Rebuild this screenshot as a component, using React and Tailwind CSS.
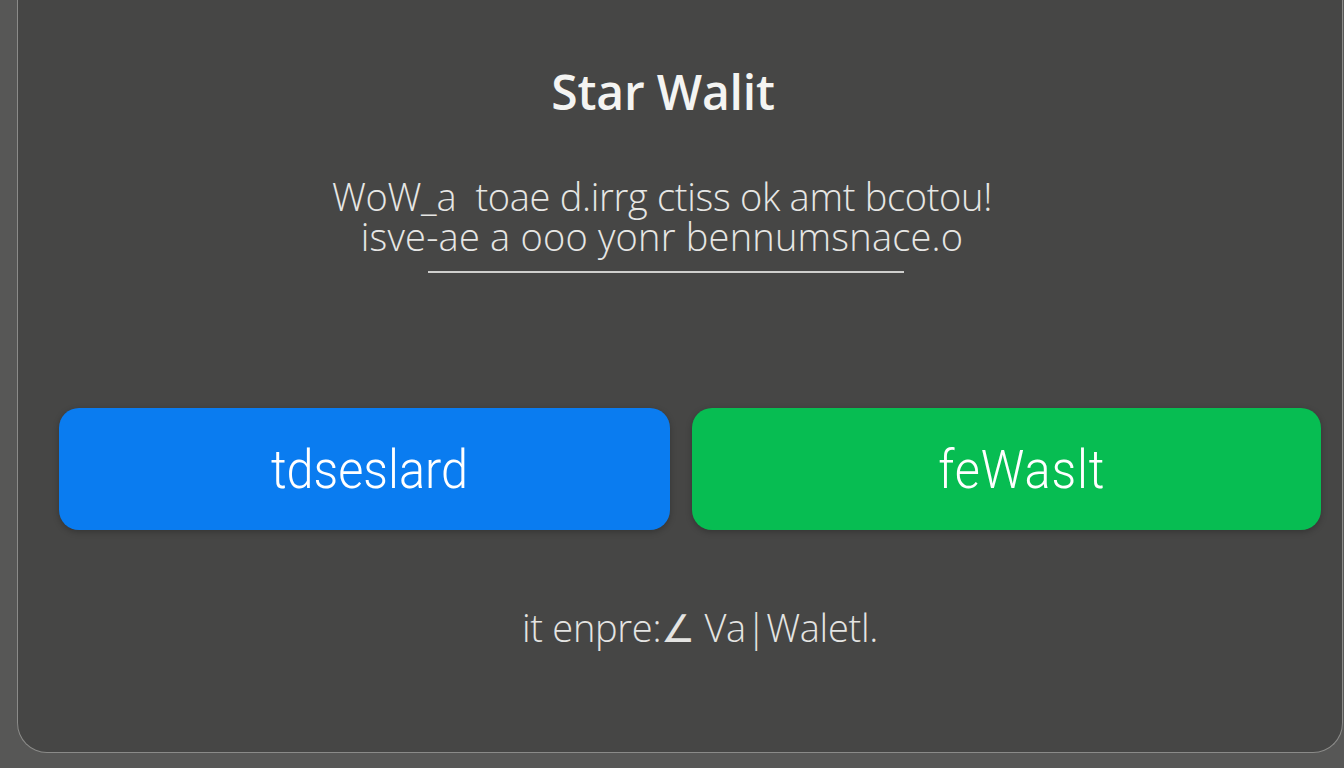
export default function App() {
  return (
    <div className="w-[1344px] h-[768px] bg-[#575756] overflow-hidden relative" style={{ fontFamily: '"Open Sans", "Noto Sans", sans-serif' }}>
      <div className="ml-[17px] w-[1326px] h-[753px] bg-[#464645] border-x border-b border-[#8b8b89] rounded-b-[30px] flex flex-col items-center">
        <h1 className="mt-[66px] mr-[34px] text-[48px] leading-[52px] font-semibold text-[#f4f4f2] tracking-[-0.2px]">Star Walit</h1>
        <p className="mt-[58px] mr-[36px] text-[38px] leading-[40px] font-light text-[#e6e6e4] text-center tracking-[-0.3px]">
          WoW_a&nbsp; toae d.irrg ctiss ok amt bcotou!
          <br />
          <span className="tracking-[0.2px]">isve-ae a ooo yonr bennumsnace.o</span>
        </p>
        <div className="mt-[15px] mr-[28px] w-[476px] h-[2px] bg-[#cfcfcd]" />
        <div className="mt-[135px] w-full flex pl-[41px] gap-[22px]">
          <button className="w-[611px] h-[122px] rounded-[20px] bg-[#0a7cf0] flex items-center justify-center shadow-[0_2px_6px_rgba(0,0,0,0.25)]">
            <span className="text-[54px] font-light text-white scale-x-[0.9] tracking-[0px] ml-[10px]" style={{ fontFamily: 'Roboto, "Liberation Sans", sans-serif' }}>tdseslard</span>
          </button>
          <button className="w-[629px] h-[122px] rounded-[20px] bg-[#07bd52] flex items-center justify-center shadow-[0_2px_6px_rgba(0,0,0,0.25)]">
            <span className="text-[54px] font-light text-white scale-x-[0.9] tracking-[1px] ml-[30px]" style={{ fontFamily: 'Roboto, "Liberation Sans", sans-serif' }}>feWaslt</span>
          </button>
        </div>
        <p className="mt-[75px] ml-[40px] text-[38px] leading-[44px] font-light text-[#e4e4e2] tracking-[-0.3px]">it enpre:∠ Va|Waletl.</p>
      </div>
    </div>
  );
}
